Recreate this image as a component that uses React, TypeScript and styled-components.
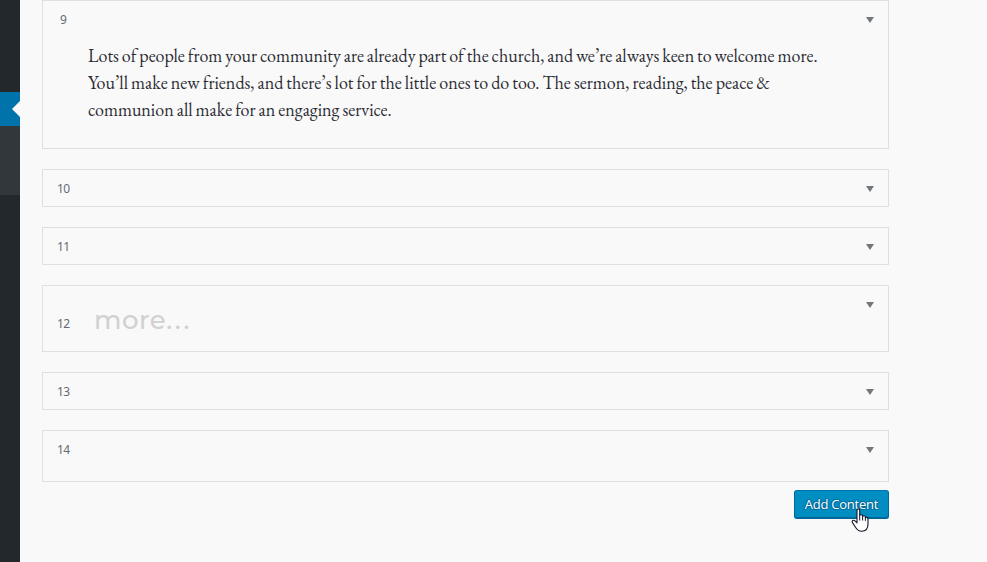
import React from "react";
import styled, { createGlobalStyle } from "styled-components";

const GlobalStyle = createGlobalStyle`
  * { box-sizing: border-box; }
  html, body { margin: 0; padding: 0; overflow: hidden; background: #f9f9f9; }
`;

const Page = styled.div`
  position: relative;
  display: flex;
  width: 987px;
  height: 562px;
  background: #f9f9f9;
  font-family: "Open Sans", "Noto Sans", sans-serif;
  overflow: hidden;
`;

const Sidebar = styled.nav`
  flex: none;
  display: flex;
  flex-direction: column;
  width: 20px;
  padding-top: 92px;
  background: #23282d;
`;

const ActiveItem = styled.div`
  display: flex;
  align-items: center;
  justify-content: flex-end;
  height: 34px;
  background: #0073aa;
`;

const Notch = styled.span`
  width: 0;
  height: 0;
  border: 8px solid transparent;
  border-left: 0;
  border-right-color: #f9f9f9;
`;

const Submenu = styled.div`
  height: 69px;
  background: #32373c;
`;

const Content = styled.main`
  display: flex;
  flex-direction: column;
  gap: 20px;
  width: 847px;
  margin-left: 22px;
`;

const Panel = styled.section<{ $height: number }>`
  flex: none;
  display: flex;
  align-items: flex-start;
  height: ${(p) => p.$height}px;
  padding: 0 14px;
  border: 1px solid #e0e0e0;
`;

const Index = styled.span<{ $top: number; $single: boolean }>`
  flex: none;
  width: 31px;
  padding-left: ${(p) => (p.$single ? 3 : 0)}px;
  margin-top: ${(p) => p.$top}px;
  color: #666a74;
  font: 12px/18px "Noto Sans", sans-serif;
  letter-spacing: -0.5px;
`;

const Body = styled.div`
  flex: 1;
  min-width: 0;
`;

const Paragraph = styled.p`
  margin: 41px 0 0;
  color: #2c2c34;
  font: 18px/27px "EB Garamond", "Liberation Serif", serif;
`;

const Line = styled.span<{ $wordSpacing: number }>`
  display: block;
  width: max-content;
  word-spacing: ${(p) => p.$wordSpacing}px;
`;

const Heading = styled.h2`
  margin: 17px 0 0 6px;
  color: #d1d1d1;
  font: 500 26px/34px Montserrat, "Inter", sans-serif;
  letter-spacing: 0.5px;
`;

const Dots = styled.span`
  letter-spacing: 2.7px;
`;

const Toggle = styled.svg`
  flex: none;
  width: 8px;
  height: 7px;
  margin: 15px 0 0;
  fill: #72777c;
`;

const Actions = styled.div`
  display: flex;
  justify-content: flex-end;
  margin-top: -12px;
`;

const Button = styled.button`
  width: 95px;
  height: 29px;
  padding: 0 0 1px;
  border: 1px solid;
  border-color: #0073aa #006799 #006799;
  border-radius: 3px;
  background: #008ec2;
  box-shadow: inset 0 -1px 0 #006799;
  color: #fff;
  font: 13px/26px "Open Sans", sans-serif;
  letter-spacing: -0.25px;
  text-shadow: 0 -1px 1px #006799, 1px 0 1px #006799, 0 1px 1px #006799, -1px 0 1px #006799;
  white-space: nowrap;
`;

const Cursor = styled.svg`
  position: absolute;
  left: 851px;
  top: 508px;
  width: 19px;
  height: 25px;
`;

const lines = [
  { text: "Lots of people from your community are already part of the church, and we’re always keen to welcome more.", wordSpacing: -0.7 },
  { text: "You’ll make new friends, and there’s lot for the little ones to do too. The sermon, reading, the peace &", wordSpacing: -0.53 },
  { text: "communion all make for an engaging service.", wordSpacing: -0.55 },
];

interface Item {
  id: number;
  height: number;
  top?: number;
  content?: React.ReactNode;
}

const items: Item[] = [
  {
    id: 9,
    height: 149,
    content: (
      <Paragraph>
        {lines.map((line) => (
          <Line key={line.text} $wordSpacing={line.wordSpacing}>{line.text}</Line>
        ))}
      </Paragraph>
    ),
  },
  { id: 10, height: 38 },
  { id: 11, height: 38 },
  { id: 12, height: 67, top: 29, content: <Heading>more<Dots>...</Dots></Heading> },
  { id: 13, height: 38 },
  { id: 14, height: 52 },
];

export default function App() {
  return (
    <>
      <GlobalStyle />
      <Page>
        <Sidebar>
          <ActiveItem><Notch /></ActiveItem>
          <Submenu />
        </Sidebar>
        <Content>
          {items.map((item) => (
            <Panel key={item.id} $height={item.height}>
              <Index $top={item.top ?? 10} $single={item.id < 10}>{item.id}</Index>
              <Body>{item.content}</Body>
              <Toggle viewBox="0 0 8 7"><path d="M0 1h8L4 7z" /></Toggle>
            </Panel>
          ))}
          <Actions><Button>Add Content</Button></Actions>
        </Content>
        <Cursor viewBox="0 0 19 25">
          <path
            d="M6 2.200C6 .4 8.700 .4 8.700 2.200V7.500C9.200 6.300 11.600 6.500 11.600 8V8.500C12.200 7.300 14.400 7.600 14.400 9.200V9.800C15 8.900 17 9.200 17 11V16C17 20.500 14.500 23.300 10.500 23.300C7 23.300 5.500 21 4 18.500L1.400 14.400C.5 12.800 2.400 11.600 3.700 12.700L6 14.800z"
            fill="#fff" stroke="#15152a" strokeWidth="1.1" strokeLinejoin="round"
          />
          <path d="M8.700 7.500v5M11.600 8.500v4M14.400 9.800v3" fill="none" stroke="#15152a" />
        </Cursor>
      </Page>
    </>
  );
}
